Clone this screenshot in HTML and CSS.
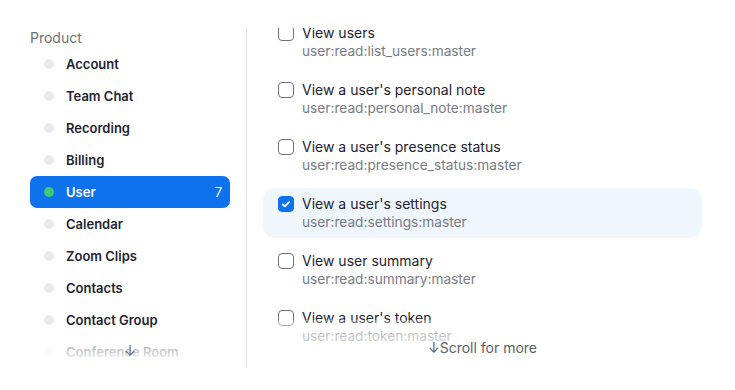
FILE: index.html
```html
<!DOCTYPE html>
<html lang="en">
<head>
  <meta charset="UTF-8" />
  <meta name="viewport" content="width=device-width, initial-scale=1.0"/>
  <title>Scopes</title>
  <link rel="stylesheet" href="styles.css">
</head>
<body>
  <div class="page">
    <aside class="sidebar">
      <div class="side-scroll">
        <div class="group-title">Product</div>
        <ul class="nav">
          <li class="nav-item"><span class="dot"></span>Account</li>
          <li class="nav-item"><span class="dot"></span>Team Chat</li>
          <li class="nav-item"><span class="dot"></span>Recording</li>
          <li class="nav-item"><span class="dot"></span>Billing</li>
          <li class="nav-item active"><span class="dot"></span>User<span class="count">7</span></li>
          <li class="nav-item"><span class="dot"></span>Calendar</li>
          <li class="nav-item"><span class="dot"></span>Zoom Clips</li>
          <li class="nav-item"><span class="dot"></span>Contacts</li>
          <li class="nav-item"><span class="dot"></span>Contact Group</li>
          <li class="nav-item"><span class="dot"></span>Conference Room</li>
        </ul>
      </div>
      <div class="fade side-fade"><span class="arrow">↓</span></div>
    </aside>

    <main class="content">
      <div class="list">
        <label class="scope">
          <input type="checkbox">
          <span class="scope-text">
            <span class="scope-name">View users</span>
            <span class="scope-id">user:read:list_users:master</span>
          </span>
        </label>
        <label class="scope">
          <input type="checkbox">
          <span class="scope-text">
            <span class="scope-name">View a user's personal note</span>
            <span class="scope-id">user:read:personal_note:master</span>
          </span>
        </label>
        <label class="scope">
          <input type="checkbox">
          <span class="scope-text">
            <span class="scope-name">View a user's presence status</span>
            <span class="scope-id">user:read:presence_status:master</span>
          </span>
        </label>
        <label class="scope selected">
          <input type="checkbox" checked>
          <span class="scope-text">
            <span class="scope-name">View a user's settings</span>
            <span class="scope-id">user:read:settings:master</span>
          </span>
        </label>
        <label class="scope">
          <input type="checkbox">
          <span class="scope-text">
            <span class="scope-name">View user summary</span>
            <span class="scope-id">user:read:summary:master</span>
          </span>
        </label>
        <label class="scope">
          <input type="checkbox">
          <span class="scope-text">
            <span class="scope-name">View a user's token</span>
            <span class="scope-id">user:read:token:master</span>
          </span>
        </label>
      </div>
      <div class="fade content-fade"><span class="more">↓Scroll for more</span></div>
    </main>
  </div>
</body>
</html>
```

FILE: styles.css
```css
*, *::before, *::after {
  box-sizing: border-box;
}

* {
  margin: 0;
}

body {
  padding: 0;
  font-family: 'Inter', 'Noto Sans', sans-serif;
  -webkit-font-smoothing: antialiased;
  background: #fff;
  color: #222;
}

.page {
  display: flex;
  height: 390px;
  padding-top: 28px;
  padding-bottom: 22px;
}

/* sidebar */
.sidebar {
  position: relative;
  width: 247px;
  flex: none;
  border-right: 1px solid #e3e3e6;
  overflow: hidden;
}

.side-scroll {
  padding: 0 16px 0 30px;
}

.group-title {
  font-size: 14px;
  line-height: 20px;
  color: #6e7179;
}

.nav {
  list-style: none;
  padding: 0;
}

.nav-item {
  display: flex;
  align-items: center;
  height: 32px;
  padding: 0 8px 0 14px;
  border-radius: 7px;
  font-size: 13px;
  font-weight: 600;
  color: #232333;
}

.dot {
  width: 10px;
  height: 10px;
  border-radius: 50%;
  background: #e9e9ef;
  margin-right: 12px;
  flex: none;
}

.nav-item.active {
  background: #0e72ed;
  color: #fff;
}

.nav-item.active .dot {
  background: #3fcb72;
}

.count {
  margin-left: auto;
  font-weight: 400;
  font-size: 13px;
}

.fade {
  position: absolute;
  left: 0;
  right: 0;
  bottom: 0;
  display: flex;
  justify-content: center;
}

.side-fade {
  height: 34px;
  padding: 8px 0 0 14px;
  background: linear-gradient(to bottom, rgba(255,255,255,0.5), rgba(255,255,255,0.75) 50%, #fff 85%);
}

.arrow {
  font-size: 15px;
  line-height: 18px;
  color: #6e7179;
}

/* content */
.content {
  position: relative;
  flex: 1;
  overflow: hidden;
  padding: 0 33px 0 16px;
}

.list {
  display: flex;
  flex-direction: column;
  gap: 7px;
  margin-top: -11px;
}

.scope {
  display: flex;
  align-items: flex-start;
  gap: 8px;
  padding: 7px 15px;
  border-radius: 12px;
  cursor: pointer;
}

.scope.selected {
  background: #f0f6fe;
}

.scope input {
  appearance: none;
  width: 16px;
  height: 16px;
  margin: 1px 0 0;
  border: 1.5px solid #6e7179;
  border-radius: 4px;
  background: #fff;
  flex: none;
}

.scope input:checked {
  border-color: #0e72ed;
  background: #0e72ed url("data:image/svg+xml,%3Csvg xmlns='http://www.w3.org/2000/svg' viewBox='0 0 16 16'%3E%3Cpath d='M4.2 8.3l2.5 2.4 5-5.2' fill='none' stroke='%23fff' stroke-width='2' stroke-linecap='round' stroke-linejoin='round'/%3E%3C/svg%3E") center / 14px no-repeat;
}

.scope-text {
  display: flex;
  flex-direction: column;
}

.scope-name {
  font-size: 14px;
  line-height: 18px;
  color: #232333;
}

.scope-id {
  font-size: 13.7px;
  line-height: 18px;
  color: #787c84;
}

.content-fade {
  height: 48px;
  align-items: flex-end;
  padding: 0 17px 9px 0;
  background: linear-gradient(to bottom, rgba(255,255,255,0.3), rgba(255,255,255,0.6) 40%, #fff 85%);
}

.more {
  font-size: 14px;
  line-height: 22px;
  color: #5c5f66;
}
```
